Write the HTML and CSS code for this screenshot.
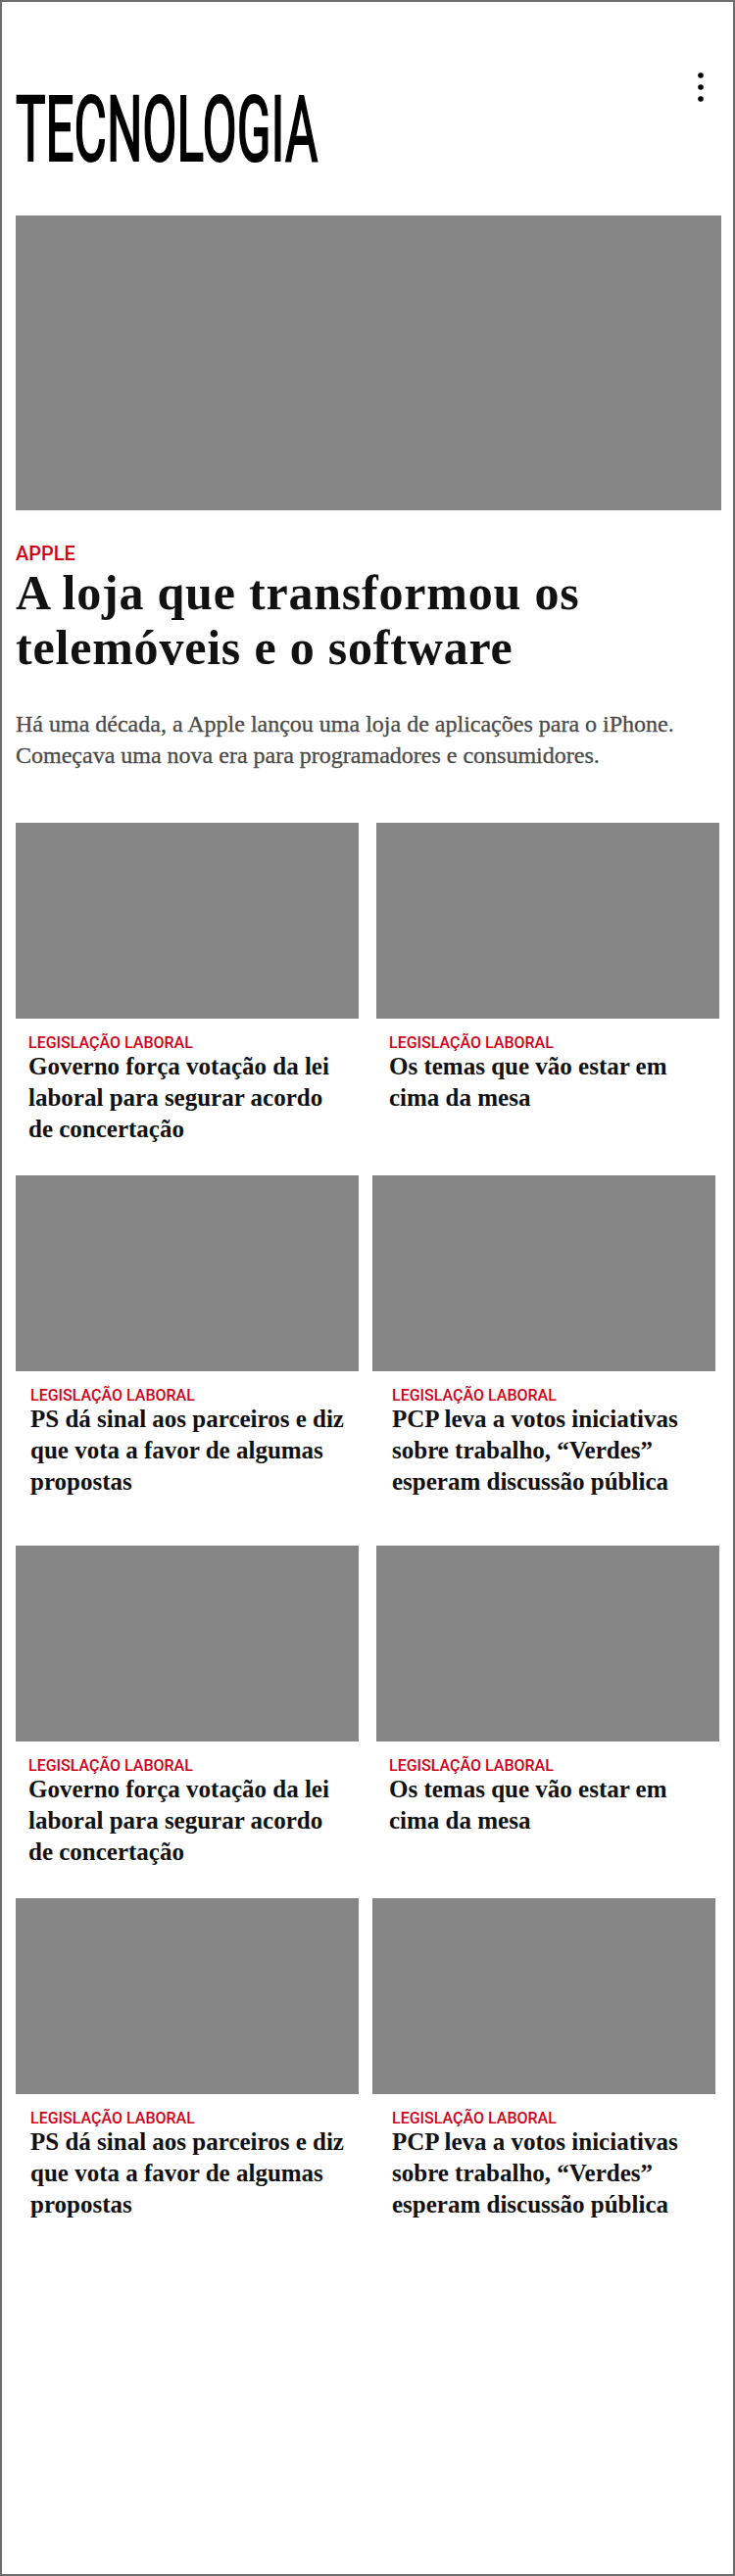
FILE: index.html
```html
<!DOCTYPE html>
<html lang="pt">
<head>
<meta charset="utf-8">
<title>Tecnologia</title>
<link rel="stylesheet" href="styles.css">
</head>
<body>
<div class="page">
  <header class="header">
    <h1 class="title"><span class="title-text">TECNOLOGIA</span></h1>
    <button class="menu" type="button" aria-label="Menu">
      <svg width="8" height="30" viewBox="0 0 8 30"><circle cx="4" cy="3" r="2.8"/><circle cx="4" cy="15" r="2.8"/><circle cx="4" cy="27" r="2.8"/></svg>
    </button>
  </header>

  <article class="hero">
    <div class="hero-img"></div>
    <div class="kicker hero-kicker">APPLE</div>
    <h2 class="hero-title">A loja que transformou os telemóveis e o software</h2>
    <p class="lede">Há uma década, a Apple lançou uma loja de aplicações para o iPhone. Começava uma nova era para programadores e consumidores.</p>
  </article>

  <section class="grid">
    <div class="row row-a">
      <article class="card">
        <div class="card-img"></div>
        <div class="card-body">
          <div class="kicker card-kicker">LEGISLAÇÃO LABORAL</div>
          <h3 class="card-title">Governo força votação da lei laboral para segurar acordo de concertação</h3>
        </div>
      </article>
      <article class="card">
        <div class="card-img"></div>
        <div class="card-body">
          <div class="kicker card-kicker">LEGISLAÇÃO LABORAL</div>
          <h3 class="card-title">Os temas que vão estar em cima da mesa</h3>
        </div>
      </article>
    </div>
    <div class="row row-b">
      <article class="card">
        <div class="card-img"></div>
        <div class="card-body">
          <div class="kicker card-kicker">LEGISLAÇÃO LABORAL</div>
          <h3 class="card-title">PS dá sinal aos parceiros e diz que vota a favor de algumas propostas</h3>
        </div>
      </article>
      <article class="card">
        <div class="card-img"></div>
        <div class="card-body">
          <div class="kicker card-kicker">LEGISLAÇÃO LABORAL</div>
          <h3 class="card-title">PCP leva a votos iniciativas sobre trabalho, “Verdes” esperam discussão pública</h3>
        </div>
      </article>
    </div>
    <div class="row row-a">
      <article class="card">
        <div class="card-img"></div>
        <div class="card-body">
          <div class="kicker card-kicker">LEGISLAÇÃO LABORAL</div>
          <h3 class="card-title">Governo força votação da lei laboral para segurar acordo de concertação</h3>
        </div>
      </article>
      <article class="card">
        <div class="card-img"></div>
        <div class="card-body">
          <div class="kicker card-kicker">LEGISLAÇÃO LABORAL</div>
          <h3 class="card-title">Os temas que vão estar em cima da mesa</h3>
        </div>
      </article>
    </div>
    <div class="row row-b">
      <article class="card">
        <div class="card-img"></div>
        <div class="card-body">
          <div class="kicker card-kicker">LEGISLAÇÃO LABORAL</div>
          <h3 class="card-title">PS dá sinal aos parceiros e diz que vota a favor de algumas propostas</h3>
        </div>
      </article>
      <article class="card">
        <div class="card-img"></div>
        <div class="card-body">
          <div class="kicker card-kicker">LEGISLAÇÃO LABORAL</div>
          <h3 class="card-title">PCP leva a votos iniciativas sobre trabalho, “Verdes” esperam discussão pública</h3>
        </div>
      </article>
    </div>
  </section>
</div>
</body>
</html>
```

FILE: styles.css
```css
* {
  box-sizing: border-box;
  margin: 0;
  padding: 0;
}

html, body {
  background: #ffffff;
}

body {
  margin: 0;
}

.page {
  width: 750px;
  height: 2630px;
  border: 2px solid #6d6d6d;
  overflow: hidden;
  background: #ffffff;
}

/* Header */
.header {
  display: flex;
  justify-content: space-between;
  align-items: flex-start;
  padding: 72px 29px 0 14px;
}

.title {
  margin-top: 12px;
  font-family: Roboto, "Liberation Sans", sans-serif;
  font-weight: 400;
  font-size: 93px;
  line-height: 93px;
  color: #000;
  letter-spacing: 0;
  white-space: nowrap;
}

.title-text {
  display: inline-block;
  transform: scaleX(0.55);
  transform-origin: left center;
  -webkit-text-stroke: 2.2px #000;
}

.menu {
  border: 0;
  background: none;
  display: block;
  width: 8px;
  height: 30px;
}

.menu svg {
  display: block;
  fill: #000;
}

/* Hero */
.hero {
  margin: 41px 12px 0 14px;
}

.hero-img {
  height: 301px;
  background: #868686;
}

.kicker {
  font-family: Roboto, "Liberation Sans", sans-serif;
  font-weight: 500;
  color: #d0021b;
}

.hero-kicker {
  margin-top: 33px;
  font-size: 20px;
  line-height: 23px;
}

.hero-title {
  font-family: "Liberation Serif", serif;
  font-weight: 700;
  font-size: 50px;
  line-height: 56px;
  letter-spacing: 0.8px;
  color: #111;
}

.lede {
  margin-top: 34px;
  font-family: "Liberation Serif", serif;
  font-size: 24px;
  line-height: 32px;
  color: #4a4a4a;
  -webkit-text-stroke: 0.3px #4a4a4a;
}

/* Grid of cards */
.grid {
  margin: 53px 0 0 14px;
}

.row {
  display: flex;
}

.row-a {
  gap: 18px;
  margin-bottom: 31px;
}

.row-b {
  gap: 14px;
  margin-bottom: 49px;
}

.card {
  width: 350px;
}

.card-img {
  height: 200px;
  background: #868686;
}

.card-body {
  padding: 16px 6px 0 13px;
}

.row-b .card-body {
  padding-left: 15px;
}

.row-b .card + .card .card-body {
  padding-left: 20px;
  padding-right: 4px;
}

.card-kicker {
  font-size: 16px;
  line-height: 17px;
}

.card-title {
  font-family: "Liberation Serif", serif;
  font-weight: 700;
  font-size: 25px;
  line-height: 32px;
  color: #111;
}
```
